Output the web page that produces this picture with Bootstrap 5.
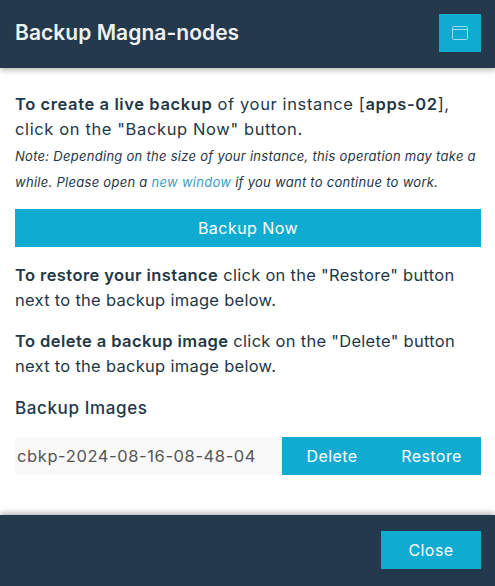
<!DOCTYPE html>
<html lang="en">
<head>
<meta charset="utf-8">
<title>Backup Magna-nodes</title>
<link rel="stylesheet" href="https://cdn.jsdelivr.net/npm/bootstrap@5.3.0/dist/css/bootstrap.min.css">
<style>
html,body{height:100%;}
body{font-family:"Inter","Liberation Sans",sans-serif;color:#243746;background:#fff;font-size:16px;}
.shell{height:586px;width:495px;overflow:hidden;}
.head-bar,.foot-bar{background:#24394b;}
.head-bar{height:68px;padding:14px 14px 16px 15px;box-shadow:0 2px 6px rgba(0,0,0,.3);position:relative;z-index:1;}
.foot-bar{height:71px;padding:16px 14px 17px 15px;box-shadow:0 -2px 6px rgba(0,0,0,.3);position:relative;z-index:1;}
.head-title{font-size:21px;font-weight:600;color:#f1f1f1;margin:0;line-height:38px;letter-spacing:.05px;}
.act{background:#0fabd0;color:#fff;border:0;border-radius:0;height:38px;font-size:16px;line-height:38px;padding:0;letter-spacing:.45px;}
.act:hover{background:#0fabd0;color:#fff;}
.act-icon{width:42px;}
.act-close{width:100px;}
.main-area{padding:24px 14px 0 15px;flex:1 1 auto;}
.txt{font-size:16.5px;line-height:25px;letter-spacing:.28px;margin:0;white-space:nowrap;}
.txt b{font-weight:600;letter-spacing:.42px;}
.txt-wide{letter-spacing:.62px;}
.txt-wide b{letter-spacing:.6px;}
.note{display:block;font-size:13px;line-height:26px;font-style:italic;letter-spacing:.28px;margin-top:1px;white-space:nowrap;}
.note a{color:#3aa0c4;text-decoration:none;}
.act-wide{margin-top:14px;margin-bottom:16px;}
.imgs-head{font-size:17px;font-weight:500;line-height:25px;margin:17px 0 16px;letter-spacing:.62px;}
.img-name{background:#f9f9f9;width:267px;height:38px;line-height:38px;padding-left:2px;font-size:16.5px;color:#555;letter-spacing:.6px;white-space:nowrap;}
.act-del{width:100px;}
.act-res{width:99px;}
</style>
</head>
<body>
<div class="shell d-flex flex-column">
  <div class="head-bar d-flex justify-content-between align-items-start">
    <h1 class="head-title">Backup Magna-nodes</h1>
    <button type="button" class="btn act act-icon d-flex align-items-center justify-content-center" aria-label="Window">
      <svg width="16" height="14" viewBox="0 0 16 14" fill="none" stroke="#9bdbeb" stroke-width="1"><rect x=".5" y=".5" width="15" height="13" rx="1"/><path d="M.5 3.5h15"/></svg>
    </button>
  </div>
  <div class="main-area">
    <p class="txt txt-wide"><b>To create a live backup</b> of your instance [<b>apps-02</b>],<br>click on the "Backup Now" button.</p>
    <span class="note">Note: Depending on the size of your instance, this operation may take a<br>while. Please open a <a href="#">new window</a> if you want to continue to work.</span>
    <button type="button" class="btn act act-wide w-100 d-block">Backup Now</button>
    <p class="txt mb-3"><b>To restore your instance</b> click on the "Restore" button<br>next to the backup image below.</p>
    <p class="txt"><b>To delete a backup image</b> click on the "Delete" button<br>next to the backup image below.</p>
    <div class="imgs-head">Backup Images</div>
    <div class="d-flex">
      <div class="img-name">cbkp-2024-08-16-08-48-04</div>
      <button type="button" class="btn act act-del">Delete</button>
      <button type="button" class="btn act act-res">Restore</button>
    </div>
  </div>
  <div class="foot-bar d-flex justify-content-end align-items-start">
    <button type="button" class="btn act act-close">Close</button>
  </div>
</div>
<script src="https://cdn.jsdelivr.net/npm/bootstrap@5.3.0/dist/js/bootstrap.bundle.min.js"></script>
</body>
</html>
